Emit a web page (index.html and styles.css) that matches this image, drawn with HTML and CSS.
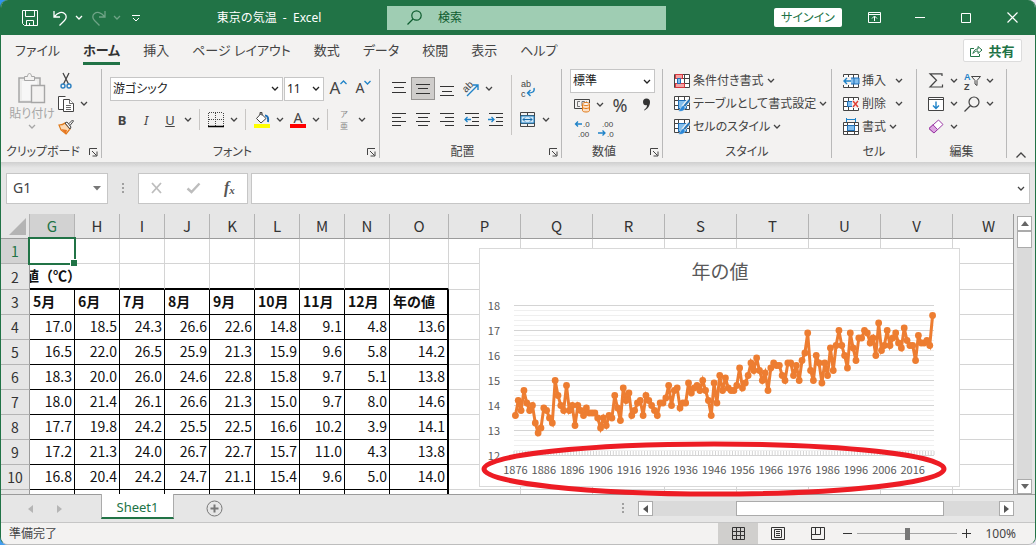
FILE: index.html
```html
<!DOCTYPE html>
<html lang="ja">
<head>
  <meta charset="UTF-8">
  <meta name="viewport" content="width=device-width, initial-scale=1.0">
  <title>東京の気温 - Excel</title>
  <link rel="stylesheet" href="styles.css">
</head>
<body>
  <svg class="defs" width="0" height="0" aria-hidden="true">
    <symbol id="chev" viewBox="0 0 8 5"><path d="M1 1l3 3 3-3" fill="none" stroke="currentColor" stroke-width="1.3"/></symbol>
    <symbol id="launcher" viewBox="0 0 9 9"><path d="M.5 7V.5H8M3 3l4.500 4.500M8 3.500V8H3.500" fill="none" stroke="currentColor"/></symbol>
    <symbol id="grid" viewBox="0 0 16 16"><path d="M.5 1.500h15v13H.5zM.5 5.500h15M.5 10.500h15M5.500 1.500v13M10.500 1.500v13" fill="#fff" stroke="#444"/></symbol>
    <symbol id="brush-grid" viewBox="0 0 16 16">
      <path d="M.5 .5h15v13H.5zM.5 4.500h15M.5 9.500h15M4.500 .5v13M10.500 .5v13" fill="#fff" stroke="#444"/>
      <path d="M4.500 4.500h8v8h-8z" fill="#83beec" stroke="#1e6fb8"/>
      <path d="M15 4L9 11" stroke="#f3f2f1" stroke-width="4"/>
      <path d="M15.500 4L9.500 11" stroke="#2b78b8" stroke-width="2"/>
      <path d="M9.500 9.500c-3 0-2 4-5.500 5.500 4 1 7 0 7-4z" fill="#2b88d8" stroke="#f3f2f1" stroke-width=".5"/>
    </symbol>
  </svg>

  <div class="window">
    <header class="titlebar">
      <div class="title-left">
        <div class="quick">
          <button type="button" aria-label="上書き保存"><svg width="16" height="16" fill="none" stroke="#fff"><path d="M.5 .5h15v15h-13l-2-2zM3.500 .5v6h9v-6M4.500 15.500v-5h7v5M7.500 13v2.500"/></svg></button>
          <button type="button" aria-label="元に戻す"><svg width="15" height="16" fill="none" stroke="#fff" stroke-width="1.300"><path d="M1 1v6h6M1.500 6.500C5 2 9 1.500 11.500 3.500c2.500 2 2 5 0 7L6.500 15.500"/></svg></button>
          <button type="button" class="dd" aria-label="元に戻す履歴"><svg width="8" height="5"><use href="#chev"/></svg></button>
          <button type="button" class="dim" aria-label="やり直し"><svg width="15" height="16" fill="none" stroke="#fff" stroke-width="1.300"><path d="M14 1v6H8M13.500 6.500C10 2 6 1.500 3.500 3.500c-2.500 2-2 5 0 7l5 5"/></svg></button>
          <button type="button" class="dd dim" aria-label="やり直し履歴"><svg width="8" height="5"><use href="#chev"/></svg></button>
          <button type="button" aria-label="クイック アクセスのカスタマイズ"><svg width="8" height="8" fill="none" stroke="#fff"><path d="M0 1.500h8M1 4l3 3 3-3"/></svg></button>
        </div>
        <div class="doc-title">東京の気温&nbsp; -&nbsp; Excel</div>
      </div>
      <label class="search">
        <svg width="15" height="15" fill="none" stroke="#0e5c2f" stroke-width="1.200"><circle cx="9.500" cy="5.500" r="4.700"/><path d="M6 9l-5.500 5.500"/></svg>
        <input type="text" placeholder="検索" aria-label="検索">
      </label>
      <div class="title-right">
        <button type="button" class="signin">サインイン</button>
        <button type="button" class="win" aria-label="リボンの表示オプション"><svg width="13" height="11" fill="none" stroke="#fff"><path d="M.5 .5h12v10H.5zM.5 2.500h12M6.500 9V4.500M4 6.500l2.500-2.500L9 6.500"/></svg></button>
        <button type="button" class="win" aria-label="最小化"><svg width="10" height="10"><path d="M0 4.500h10" stroke="#fff"/></svg></button>
        <button type="button" class="win" aria-label="最大化"><svg width="10" height="10"><path d="M.5 .5h9v9h-9z" fill="none" stroke="#fff"/></svg></button>
        <button type="button" class="win" aria-label="閉じる"><svg width="11" height="11"><path d="M.5 .5l10 10M10.500 .5l-10 10" stroke="#fff" stroke-width="1.200"/></svg></button>
      </div>
    </header>

    <nav class="tabs">
      <a href="#">ファイル</a>
      <a href="#" class="current">ホーム</a>
      <a href="#">挿入</a>
      <a href="#">ページ レイアウト</a>
      <a href="#">数式</a>
      <a href="#">データ</a>
      <a href="#">校閲</a>
      <a href="#">表示</a>
      <a href="#">ヘルプ</a>
      <button type="button" class="share">
        <svg width="13" height="12" fill="none" stroke="#217346"><path d="M4 3.500H.5v8h9V9M3 8.500c.5-3 2.500-4.500 5-4.500V1.500L12 5 8 8.500V6C6 6 4.500 6.500 3 8.500z"/></svg>共有
      </button>
    </nav>

    <div class="ribbon">
      <section class="group g-clip">
        <div class="tools">
          <button type="button" class="paste">
            <svg width="28" height="31" fill="none" stroke="#a6a6a6"><path d="M1 5h21v24H1z" fill="#ededec" stroke-width="1.500"/><path d="M4 8h15v19H4z" fill="#f7f7f7" stroke="none"/><path d="M6.500 7.500v-4h3c0-4 4-4 4 0h3v4z" fill="#f3f2f1"/><path d="M13.500 12.500h13v17h-13z" fill="#f3f2f1" stroke-width="1.400"/></svg>
            <span>貼り付け</span>
            <svg width="8" height="5"><use href="#chev"/></svg>
          </button>
          <div class="clip-side">
            <button type="button" aria-label="切り取り"><svg width="16" height="16" fill="none"><path d="M5 0l5.500 11M11 0L5.500 11" stroke="#444" stroke-width="1.300"/><circle cx="5" cy="13" r="2" stroke="#2b7fc0" stroke-width="1.400"/><circle cx="11" cy="13" r="2" stroke="#2b7fc0" stroke-width="1.400"/></svg></button><span></span>
            <button type="button" aria-label="コピー"><svg width="16" height="16" fill="#fff" stroke="#444"><path d="M6 13.500H.5V.5h7"/><path d="M5.500 3.500h6l4 4v8h-10z"/><path d="M11.500 3.500v4h4M8 9.500h5M8 11.500h5M8 13.500h5" stroke-width=".8"/></svg></button>
            <button type="button" class="dd" aria-label="コピーのオプション"><svg width="8" height="5"><use href="#chev"/></svg></button>
            <button type="button" aria-label="書式のコピー"><svg width="16" height="16"><path d="M1 6c4 0 5-1 6-2l5 6c-2 2-3 4-4 5L3 11z" fill="#fbd9b4" stroke="#e07b1c" stroke-width="1.200"/><path d="M3 10l6 1-1 4z" fill="#e87722"/><path d="M7 4l2-1 4 5-1 2zM10.500 5l4-4 1 1-3.500 4.500" fill="#fff" stroke="#444"/></svg></button><span></span>
          </div>
        </div>
        <footer>クリップボード<button type="button" class="launch" aria-label="クリップボードの設定"><svg width="9" height="9"><use href="#launcher"/></svg></button></footer>
      </section>

      <section class="group g-font">
        <div class="tools stack">
          <div class="row">
            <div class="combo font-name"><select aria-label="フォント"><option>游ゴシック</option></select><svg width="8" height="5"><use href="#chev"/></svg></div>
            <div class="combo font-size"><select aria-label="フォント サイズ"><option>11</option></select><svg width="8" height="5"><use href="#chev"/></svg></div>
            <button type="button" class="grow" aria-label="フォント サイズの拡大">A<svg width="7" height="5"><path d="M.5 4l3-3 3 3" fill="none" stroke="#1f83c8" stroke-width="1.300"/></svg></button>
            <button type="button" class="grow small" aria-label="フォント サイズの縮小">A<svg width="7" height="5"><path d="M.5 1l3 3 3-3" fill="none" stroke="#1f83c8" stroke-width="1.300"/></svg></button>
          </div>
          <div class="row">
            <button type="button" class="b">B</button>
            <button type="button" class="i">I</button>
            <button type="button" class="u">U</button>
            <button type="button" class="dd" aria-label="下線"><svg width="8" height="5"><use href="#chev"/></svg></button>
            <i class="sep"></i>
            <button type="button" aria-label="罫線"><svg width="16" height="16" fill="none" stroke="#444"><path d="M.5 1v13M15.500 1v13M1 .5h14" stroke-dasharray="1 1"/><path d="M7.500 1v13M1 7.500h14" stroke-dasharray="1 1"/><path d="M0 14.500h16" stroke="#000" stroke-width="1.500"/></svg></button>
            <button type="button" class="dd" aria-label="罫線の種類"><svg width="8" height="5"><use href="#chev"/></svg></button>
            <i class="sep"></i>
            <button type="button" aria-label="塗りつぶしの色"><svg width="16" height="16"><path d="M0 12h16v4H0z" fill="#ff0"/><path d="M7 1.500l5 5-5 4.500-4.500-4.500zM6 3V.5h2v3" fill="#fff" stroke="#444"/><path d="M11 3.500c3 0 3.500 3 3 6.500" fill="none" stroke="#1e6fb8" stroke-width="2"/></svg></button>
            <button type="button" class="dd" aria-label="塗りつぶしの色の一覧"><svg width="8" height="5"><use href="#chev"/></svg></button>
            <button type="button" class="font-color">A</button>
            <button type="button" class="dd" aria-label="フォントの色の一覧"><svg width="8" height="5"><use href="#chev"/></svg></button>
            <i class="sep"></i>
            <button type="button" class="ruby"><span>ア</span><span>亜</span></button>
            <button type="button" class="dd" aria-label="ふりがなの設定"><svg width="8" height="5"><use href="#chev"/></svg></button>
          </div>
        </div>
        <footer>フォント<button type="button" class="launch" aria-label="フォントの設定"><svg width="9" height="9"><use href="#launcher"/></svg></button></footer>
      </section>

      <section class="group g-align">
        <div class="tools">
          <div class="stack">
            <div class="row">
              <button type="button" aria-label="上揃え"><svg width="14" height="14" stroke="#333"><path d="M0 .5h14M2 5.500h10M0 10.500h14"/></svg></button>
              <button type="button" class="on" aria-label="上下中央揃え"><svg width="14" height="14" stroke="#333"><path d="M0 2.500h14M2 6.500h10M0 11.500h14"/></svg></button>
              <button type="button" aria-label="下揃え"><svg width="14" height="14" stroke="#333"><path d="M0 4.500h14M2 9.500h10M0 13.500h14"/></svg></button>
              <button type="button" aria-label="方向"><svg width="18" height="18"><text x="0" y="0" class="ab" transform="translate(4 13) rotate(-45)">ab</text><path d="M5 16L15.500 5.500M11 5h5v5" fill="none" stroke="#1f83c8" stroke-width="1.400"/></svg></button>
              <button type="button" class="dd" aria-label="方向の一覧"><svg width="8" height="5"><use href="#chev"/></svg></button>
            </div>
            <div class="row">
              <button type="button" aria-label="左揃え"><svg width="14" height="14" stroke="#333"><path d="M0 .5h14M0 4.500h9M0 8.500h14M0 12.500h9"/></svg></button>
              <button type="button" aria-label="中央揃え"><svg width="14" height="14" stroke="#333"><path d="M0 .5h14M2 4.500h10M0 8.500h14M2 12.500h10"/></svg></button>
              <button type="button" aria-label="右揃え"><svg width="14" height="14" stroke="#333"><path d="M0 .5h14M5 4.500h9M0 8.500h14M5 12.500h9"/></svg></button>
              <button type="button" aria-label="インデントを減らす"><svg width="15" height="14" fill="none" stroke="#333"><path d="M1 .5h14M8 4.500h7M8 8.500h7M1 12.500h14"/><path d="M7 6.500H1M3.500 4L1 6.500 3.500 9" stroke="#1f83c8" stroke-width="1.300"/></svg></button>
              <button type="button" aria-label="インデントを増やす"><svg width="15" height="14" fill="none" stroke="#333"><path d="M1 .5h14M8 4.500h7M8 8.500h7M1 12.500h14"/><path d="M0 6.500h6M3.500 4L6 6.500 3.500 9" stroke="#1f83c8" stroke-width="1.300"/></svg></button>
            </div>
          </div>
          <i class="sep tall"></i>
          <div class="stack">
            <div class="row"><button type="button" class="wrap" aria-label="折り返して全体を表示する"><svg width="16" height="18"><text x="1" y="7" class="ab">ab</text><text x="1" y="17" class="ab">c</text><path d="M14 8c1 4-2 5-6 5M10.500 10L7.500 13l3 3" fill="none" stroke="#1f83c8" stroke-width="1.400"/></svg></button></div>
            <div class="row">
              <button type="button" aria-label="セルを結合して中央揃え"><svg width="16" height="15" fill="none" stroke="#444"><path d="M.5 .5h14v14H.5zM.5 3.500h14M.5 11.500h14M7.500 .5v3M7.500 11.500v3"/><path d="M1 4h13v7H1z" fill="#cfe6f7" stroke="#1f83c8"/><path d="M3 7.500h9M5 5.500l-2 2 2 2M10 5.500l2 2-2 2" stroke="#1569a8"/></svg></button>
              <button type="button" class="dd" aria-label="結合の一覧"><svg width="8" height="5"><use href="#chev"/></svg></button>
            </div>
          </div>
        </div>
        <footer>配置<button type="button" class="launch" aria-label="配置の設定"><svg width="9" height="9"><use href="#launcher"/></svg></button></footer>
      </section>

      <section class="group g-num">
        <div class="tools stack three">
          <div class="combo number"><select aria-label="表示形式"><option>標準</option></select><svg width="8" height="5"><use href="#chev"/></svg></div>
          <div class="row">
            <button type="button" aria-label="通貨表示形式"><svg width="17" height="15" fill="none"><path d="M9 11.500H.5v-9h15V6" stroke="#444"/><path d="M6 4.500H3.500v5H6M8 9V4.500h2.500V8M12.500 4.500v2" stroke="#777"/><path d="M8.500 7v6.500c0 2 7 2 7 0V7" fill="#fce0c4" stroke="#e07b1c"/><ellipse cx="12" cy="7" rx="3.500" ry="1.500" fill="#fff" stroke="#e07b1c"/><path d="M8.500 10c0 2 7 2 7 0" stroke="#e07b1c"/></svg></button>
            <button type="button" class="dd" aria-label="通貨の一覧"><svg width="8" height="5"><use href="#chev"/></svg></button>
            <button type="button" class="percent">%</button>
            <button type="button" aria-label="桁区切りスタイル"><svg width="9" height="13"><path d="M1 4a3.500 3.500 0 0 1 7 0c0 4-2.500 7-5.500 8.500L2 12c2-1.500 3-3 3-5-2 1-4-.5-4-3z" fill="#333"/></svg></button>
          </div>
          <div class="row">
            <button type="button" aria-label="小数点以下の表示桁数を増やす"><svg width="17" height="18"><text x="9" y="8" class="zero">.0</text><text x="4" y="18" class="zero">.00</text><path d="M8 5H1.500M4 2.500L1.500 5 4 7.500" fill="none" stroke="#1f83c8" stroke-width="1.300"/></svg></button>
            <button type="button" aria-label="小数点以下の表示桁数を減らす"><svg width="17" height="18"><text x="4" y="8" class="zero">.00</text><text x="9" y="18" class="zero">.0</text><path d="M0 14h7M4.500 11.500L7 14l-2.500 2.500" fill="none" stroke="#1f83c8" stroke-width="1.300"/></svg></button>
          </div>
        </div>
        <footer>数値<button type="button" class="launch" aria-label="数値の設定"><svg width="9" height="9"><use href="#launcher"/></svg></button></footer>
      </section>

      <section class="group g-style">
        <div class="tools stack three">
          <button type="button" class="line"><svg width="16" height="16"><use href="#grid"/><path d="M1.500 1.500h7v4h-7zM1.500 10.500h9v4h-9z" fill="#f4a3a3" stroke="#d9363e"/><path d="M3.500 5.500h3v5h-3z" fill="#83beec" stroke="#1e6fb8"/></svg>条件付き書式<svg width="8" height="5"><use href="#chev"/></svg></button>
          <button type="button" class="line"><svg width="16" height="16"><use href="#brush-grid"/></svg>テーブルとして書式設定<svg width="8" height="5"><use href="#chev"/></svg></button>
          <button type="button" class="line"><svg width="16" height="16"><use href="#brush-grid"/></svg>セルのスタイル<svg width="8" height="5"><use href="#chev"/></svg></button>
        </div>
        <footer>スタイル</footer>
      </section>

      <section class="group g-cell">
        <div class="tools stack three">
          <button type="button" class="line wide"><svg width="16" height="16"><use href="#grid"/><path d="M6 5h10v6H6z" fill="#83beec" stroke="#1e6fb8"/><path d="M11 5v6" stroke="#1e6fb8"/><path d="M0 4h8v8H0z" fill="#f3f2f1"/><path d="M8 8H1M4 5L1 8l3 3" fill="none" stroke="#1f83c8" stroke-width="1.400"/></svg>挿入<svg width="8" height="5"><use href="#chev"/></svg></button>
          <button type="button" class="line wide"><svg width="16" height="16"><use href="#grid"/><path d="M4.500 5.500h6v5h-6z" fill="#83beec" stroke="#1e6fb8"/><path d="M9 4h7v8H9z" fill="#f3f2f1"/><path d="M10 5l5 6M15 5l-5 6" stroke="#e03c31" stroke-width="1.400"/></svg>削除<svg width="8" height="5"><use href="#chev"/></svg></button>
          <button type="button" class="line"><svg width="16" height="17"><path d="M.5 4.500h15v12H.5zM.5 7.500h15M.5 13.500h15M4.500 4.500v12M11.500 4.500v12" fill="#fff" stroke="#444"/><path d="M4.500 7.500h7v5h-7z" fill="#83beec" stroke="#1e6fb8"/><path d="M3.500 0v4M12.500 0v4M3.500 1.500h9" stroke="#1f83c8"/></svg>書式<svg width="8" height="5"><use href="#chev"/></svg></button>
        </div>
        <footer>セル</footer>
      </section>

      <section class="group g-edit">
        <div class="tools stack three">
          <div class="row">
            <button type="button" aria-label="オート SUM"><svg width="14" height="15" fill="none" stroke="#444" stroke-width="1.200"><path d="M13 3V.8H1L7.500 7.200 1 14h12.500v-2.500"/></svg></button>
            <button type="button" class="dd" aria-label="オート SUM の一覧"><svg width="8" height="5"><use href="#chev"/></svg></button>
            <button type="button" aria-label="並べ替えとフィルター"><svg width="17" height="18"><text x="0" y="8" class="az blue">A</text><text x="0" y="18" class="az">Z</text><path d="M7.500 4.500h9l-3.500 4v5l-2-1.500V8.500z" fill="none" stroke="#444"/></svg></button>
            <button type="button" class="dd" aria-label="並べ替えの一覧"><svg width="8" height="5"><use href="#chev"/></svg></button>
          </div>
          <div class="row">
            <button type="button" aria-label="フィル"><svg width="16" height="14" fill="none" stroke="#444"><path d="M.5 .5h15v13H.5zM.5 2.500h15" fill="#fff"/><path d="M8 4.500v7M5 8.500l3 3 3-3" stroke="#1f83c8" stroke-width="1.400"/></svg></button>
            <button type="button" class="dd" aria-label="フィルの一覧"><svg width="8" height="5"><use href="#chev"/></svg></button>
            <button type="button" aria-label="検索と選択"><svg width="16" height="16" fill="none" stroke="#444" stroke-width="1.200"><circle cx="10" cy="6" r="5"/><path d="M6.500 9.500L.5 15.500"/></svg></button>
            <button type="button" class="dd" aria-label="検索の一覧"><svg width="8" height="5"><use href="#chev"/></svg></button>
          </div>
          <div class="row">
            <button type="button" aria-label="クリア"><svg width="16" height="15" stroke="#9b3aa5"><path d="M10.500 1l4.500 4.500L6 14 1 9.500z" fill="#fff"/><path d="M5 5.800L9.500 10.500 6 14 1 9.500z" fill="#dca4e0"/></svg></button>
            <button type="button" class="dd" aria-label="クリアの一覧"><svg width="8" height="5"><use href="#chev"/></svg></button>
          </div>
        </div>
        <footer>編集</footer>
      </section>
      <button type="button" class="collapse" aria-label="リボンを折りたたむ"><svg width="10" height="6" fill="none" stroke="#444" stroke-width="1.300"><path d="M.5 5.500L5 1l4.500 4.500"/></svg></button>
    </div>

    <div class="formula-bar">
      <div class="namebox"><input type="text" value="G1" aria-label="名前ボックス"><button type="button" aria-label="名前の一覧"><svg width="8" height="5"><path d="M0 0h8L4 4.500z" fill="#777"/></svg></button></div>
      <svg class="dots" width="2" height="11" fill="#a0a0a0"><path d="M0 0h2v2H0zM0 4h2v2H0zM0 8h2v2H0z"/></svg>
      <div class="fx">
        <button type="button" aria-label="キャンセル"><svg width="11" height="10"><path d="M1 0l9 10M10 0L1 10" stroke="#bdbdbd" stroke-width="1.800"/></svg></button>
        <button type="button" aria-label="入力"><svg width="13" height="10"><path d="M.5 5.500L4.500 9l8-8.500" fill="none" stroke="#bdbdbd" stroke-width="2.400"/></svg></button>
        <button type="button" class="fn">f<small>x</small></button>
      </div>
      <div class="formula"><input type="text" aria-label="数式バー"><svg width="8" height="5"><use href="#chev"/></svg></div>
    </div>

    <main class="workspace">
      <div class="sheet">
        <table>
          <colgroup>
            <col class="c-row"><col class="c-m" span="8"><col class="c-y"><col class="c-e" span="8">
          </colgroup>
          <thead>
            <tr><th class="corner"><svg width="17" height="17"><path d="M17 0v17H0z" fill="#b4b4b4"/></svg></th><th class="sel">G</th><th>H</th><th>I</th><th>J</th><th>K</th><th>L</th><th>M</th><th>N</th><th>O</th><th>P</th><th>Q</th><th>R</th><th>S</th><th>T</th><th>U</th><th>V</th><th>W</th></tr>
          </thead>
          <tbody id="rows"></tbody>
        </table>
      </div>
      <svg class="chart" width="481" height="239" id="chart" role="img" aria-label="年の値">
        <defs><marker id="dot" markerUnits="userSpaceOnUse" markerWidth="8" markerHeight="8" refX="4" refY="4"><circle cx="4" cy="4" r="3.400" fill="#ed7d31"/></marker></defs>
        <rect x=".5" y=".5" width="480" height="238" fill="#fff" stroke="#d9d9d9"/>
        <text x="241" y="31" class="chart-title">年の値</text>
        <path id="minor" stroke="#efefef"/>
        <path id="major" stroke="#d4d4d4"/>
        <path id="ticks" stroke="#d4d4d4"/>
        <g id="labels"></g>
        <polyline id="series" fill="none" stroke="#ed7d31" stroke-width="3" marker-start="url(#dot)" marker-mid="url(#dot)" marker-end="url(#dot)"/>
      </svg>
      <svg class="mark" width="468" height="58" aria-hidden="true"><ellipse cx="234" cy="29" rx="230" ry="25" fill="none" stroke="#ed1c24" stroke-width="5"/></svg>
      <div class="vscroll">
        <button type="button" aria-label="上へ"><svg width="8" height="5"><path d="M0 5l4-5 4 5z" fill="#666"/></svg></button>
        <div class="track"><div class="thumb"></div></div>
        <button type="button" aria-label="下へ"><svg width="8" height="5"><path d="M0 0l4 5 4-5z" fill="#666"/></svg></button>
      </div>
    </main>

    <div class="sheetbar">
      <div class="sheet-nav">
        <button type="button" aria-label="前のシート"><svg width="5" height="8"><path d="M5 0v8L0 4z" fill="#b5b5b5"/></svg></button>
        <button type="button" aria-label="次のシート"><svg width="5" height="8"><path d="M0 0v8l5-4z" fill="#b5b5b5"/></svg></button>
      </div>
      <a href="#" class="sheet-tab">Sheet1</a>
      <button type="button" class="add" aria-label="新しいシート"><svg width="17" height="17" fill="none" stroke="#777"><circle cx="8.500" cy="8.500" r="7.500"/><path d="M4.500 8.500h8M8.500 4.500v8" stroke-width="2"/></svg></button>
      <svg class="dots" width="2" height="11" fill="#a0a0a0"><path d="M0 0h2v2H0zM0 4h2v2H0zM0 8h2v2H0z"/></svg>
      <div class="hscroll">
        <button type="button" aria-label="左へ"><svg width="5" height="8"><path d="M5 0v8L0 4z" fill="#555"/></svg></button>
        <div class="track"><div class="thumb"></div></div>
        <button type="button" aria-label="右へ"><svg width="5" height="8"><path d="M0 0v8l5-4z" fill="#555"/></svg></button>
      </div>
    </div>

    <footer class="status">
      <span class="ready">準備完了</span>
      <button type="button" class="view on" aria-label="標準"><svg width="13" height="13" fill="none" stroke="#333"><path d="M.5 .5h12v12H.5zM.5 4.500h12M.5 8.500h12M4.500 .5v12M8.500 .5v12"/></svg></button>
      <button type="button" class="view" aria-label="ページ レイアウト"><svg width="14" height="13" fill="none" stroke="#333"><path d="M.5 .5h13v12H.5zM3.500 2.500h7v8h-7zM5 4.500h4M5 6.500h4M5 8.500h4"/></svg></button>
      <button type="button" class="view" aria-label="改ページ プレビュー"><svg width="14" height="13" fill="none" stroke="#333"><path d="M.5 .5h13v12H.5zM4.500 .5v7M9.500 .5v7M.5 7.500h9"/></svg></button>
      <button type="button" class="zoom-btn" aria-label="縮小"><svg width="9" height="9"><path d="M0 4.500h9" stroke="#333"/></svg></button>
      <input type="range" min="0" max="100" value="50" aria-label="ズーム">
      <button type="button" class="zoom-btn" aria-label="拡大"><svg width="9" height="9"><path d="M0 4.500h9M4.500 0v9" stroke="#333"/></svg></button>
      <span class="percent-label">100%</span>
    </footer>
  </div>
  <script src="script.js"></script>
</body>
</html>
```
FILE: styles.css
```css
* {
  box-sizing: border-box;
}
body {
  margin: 0;
  height: 100vh;
  overflow: hidden;
  background: linear-gradient(100deg, #2f95f0, #e6e4f0 70%);
  font-family: "Noto Sans", "Noto Sans CJK JP", sans-serif;
  font-size: 12px;
  line-height: 16px;
  color: #444;
}
.defs {
  position: absolute;
}
svg {
  display: block;
  flex: none;
}
button {
  display: flex;
  align-items: center;
  justify-content: center;
  padding: 0;
  border: none;
  background: none;
  font: inherit;
  color: inherit;
}
button svg {
  overflow: visible;
}
input,
select {
  font: inherit;
  color: inherit;
  border: none;
  outline: none;
  background: none;
  min-width: 0;
}
.window {
  display: flex;
  flex-direction: column;
  height: 100vh;
  border: 1px solid #217346;
  border-top: none;
  border-bottom-color: #bdbdbd;
  border-radius: 8px;
  overflow: hidden;
  background: #e6e6e6;
}

/* title bar */
.titlebar {
  display: grid;
  grid-template-columns: 386fr 279fr 369fr;
  align-items: center;
  height: 35px;
  flex: none;
  background: #217346;
  color: #fff;
}
.title-left,
.title-right,
.quick {
  display: flex;
  align-items: center;
}
.quick {
  padding-left: 14px;
}
.quick button {
  width: 30px;
  height: 32px;
}
.quick .dd {
  width: 8px;
}
.quick .dim {
  opacity: 0.35;
}
.doc-title {
  flex: 1;
  text-align: center;
  white-space: nowrap;
}
.search {
  display: flex;
  align-items: center;
  gap: 16px;
  height: 24px;
  padding-left: 20px;
  background: #9fcdb3;
  color: #0e5c2f;
}
.search input {
  flex: 1;
  padding: 0;
}
.search input::placeholder {
  color: #0e5c2f;
}
.title-right {
  justify-content: flex-end;
}
.signin {
  width: 68px;
  height: 19px;
  margin-right: 9px;
  background: #fff;
  border-radius: 2px;
  color: #217346;
  font-feature-settings: "palt";
}
.win {
  width: 46px;
  height: 32px;
}

/* tabs */
.tabs {
  display: flex;
  align-items: center;
  gap: 23px;
  height: 31px;
  flex: none;
  padding: 0 13px 0 14px;
  background: #f3f2f1;
  font-size: 13px;
  font-feature-settings: "palt";
}
.tabs a {
  height: 28px;
  line-height: 26px;
  color: #444;
  text-decoration: none;
  white-space: nowrap;
}
.tabs .current {
  font-weight: bold;
  color: #333;
  border-bottom: 3px solid #217346;
}
.share {
  gap: 5px;
  width: 59px;
  height: 23px;
  margin-left: auto;
  background: #fff;
  border: 1px solid #dcdcdc;
  border-radius: 2px;
  color: #217346;
  font-weight: bold;
}

/* ribbon */
.ribbon {
  display: flex;
  height: 96px;
  flex: none;
  padding: 3px 0 4px;
  background: #f3f2f1;
}
.group {
  display: flex;
  flex-direction: column;
  border-right: 1px solid #b9b9b9;
}
.g-clip {
  width: 101px;
}
.g-font {
  width: 278px;
}
.g-align {
  width: 182px;
}
.g-num {
  width: 101px;
}
.g-style {
  width: 169px;
}
.g-cell {
  width: 85px;
}
.g-edit {
  width: 90px;
}
.tools {
  display: flex;
  flex: 1;
}
.stack {
  display: flex;
  flex-direction: column;
  padding-top: 8px;
  gap: 8px;
}
.stack.three {
  padding-top: 0;
  gap: 0;
}
.row {
  display: flex;
  align-items: center;
  height: 23px;
}
.row button {
  width: 24px;
  height: 23px;
}
.row .dd,
.clip-side .dd {
  width: 12px;
}
.group footer {
  display: flex;
  align-items: center;
  justify-content: center;
  position: relative;
  height: 12px;
  font-feature-settings: "palt";
  white-space: nowrap;
}
.launch {
  position: absolute;
  right: 3px;
  top: 2px;
}
.sep {
  width: 1px;
  height: 21px;
  margin: 0 4px 0 5px;
  background: #c8c6c4;
}
.sep.tall {
  height: 60px;
  margin: 6px 4px 0 4px;
}
.paste {
  flex-direction: column;
  justify-content: flex-start;
  width: 44px;
  margin-left: 9px;
  padding-top: 4px;
  gap: 2px;
  color: #a6a6a6;
  font-feature-settings: "palt";
  white-space: nowrap;
}
.clip-side {
  display: grid;
  grid-template-columns: 24px 12px;
  grid-auto-rows: 23px;
}
.group.g-clip footer,
.group.g-font footer,
.group.g-align footer,
.group.g-num footer {
  padding-right: 16px;
}
.g-font .tools {
  padding-left: 8px;
}
.combo {
  display: flex;
  align-items: center;
  position: relative;
  height: 24px;
  border: 1px solid #c6c6c6;
  background: #fff;
  color: #222;
}
.combo select {
  appearance: none;
  width: 100%;
  height: 22px;
  padding: 0 2px;
  font-feature-settings: "palt";
}
.combo svg {
  position: absolute;
  right: 3px;
  pointer-events: none;
}
.font-name {
  width: 173px;
  margin-right: 1px;
}
.font-size {
  width: 40px;
  margin-right: 2px;
}
.row .grow {
  align-items: flex-start;
  width: 25px;
  font-size: 17px;
  line-height: 22px;
}
.row .grow.small {
  font-size: 14px;
}
.grow svg {
  margin-top: 3px;
}
.b {
  font-weight: bold;
}
.b,
.i,
.u {
  font-size: 13px;
}
.i {
  font-style: italic;
}
.u {
  text-decoration: underline;
}
.row .font-color {
  width: 16px;
  height: 16px;
  margin: 0 4px;
  border-bottom: 4px solid #f00;
  font-size: 14px;
  line-height: 12px;
}
.row .ruby {
  flex-direction: column;
  color: #888;
  font-size: 8px;
  line-height: 12px;
}
.g-align .tools {
  padding-left: 7px;
}
.row .on {
  border: 1px solid #979593;
  background: #cfcdcb;
}
.ab,
.zero,
.az {
  font-family: "Liberation Sans", sans-serif;
  font-size: 9px;
  fill: #444;
}
.ab {
  font-size: 10px;
}
.zero {
  font-size: 8px;
}
.az {
  font-weight: bold;
}
.az.blue {
  fill: #1f83c8;
}
.wrap .ab {
  font-size: 9px;
}
.g-num .tools {
  padding-left: 8px;
}
.number {
  width: 85px;
}
.row .percent {
  width: 28px;
  font-size: 18px;
}
.g-style .tools,
.g-cell .tools {
  padding-left: 11px;
}
.line {
  justify-content: flex-start;
  gap: 3px;
  height: 23px;
  font-feature-settings: "palt";
  white-space: nowrap;
}
.line.wide svg:last-child {
  margin-left: 6px;
}
.g-edit .tools {
  padding-left: 7px;
}
.collapse {
  align-self: flex-end;
  flex: 1;
  height: 7px;
}

/* formula bar */
.formula-bar {
  display: flex;
  align-items: center;
  height: 52px;
  flex: none;
  padding: 0 5px;
  background: linear-gradient(#cfcfcf, #e6e6e6 6px);
}
.namebox,
.fx,
.formula {
  display: flex;
  align-items: center;
  height: 31px;
  border: 1px solid #c6c6c6;
  background: #fff;
}
.namebox {
  width: 102px;
  padding: 0 6px;
}
.namebox input {
  flex: 1;
  padding: 0;
  font-size: 14px;
}
.dots {
  margin: 0 14px;
}
.fx {
  justify-content: space-around;
  width: 110px;
  margin-right: 3px;
}
.fn {
  font: italic bold 16px "Liberation Serif", serif;
  color: #555;
}
.fn small {
  font-size: 11px;
  padding-top: 3px;
}
.formula {
  flex: 1;
  padding-right: 4px;
}
.formula input {
  flex: 1;
}

/* sheet */
.workspace {
  display: flex;
  position: relative;
  flex: 1;
  min-height: 0;
}
.sheet {
  flex: 1;
  min-width: 0;
  overflow: hidden;
  border-right: 1px solid #9b9b9b;
  background: #fff;
}
.sheet table {
  width: 1024px;
  table-layout: fixed;
  border-spacing: 0;
  font-family: "Noto Sans CJK JP", sans-serif;
  font-size: 14px;
  line-height: 20px;
  color: #111;
}
.c-row {
  width: 29px;
}
.c-m {
  width: 45px;
}
.c-y {
  width: 59px;
}
.c-e {
  width: 72px;
}
.sheet tr {
  height: 25px;
}
.sheet th {
  padding: 0;
  border: solid #b4b4b4;
  border-width: 0 1px 1px 0;
  background: #e6e6e6;
  font-weight: normal;
  color: #333;
}
.sheet thead th {
  border-bottom-color: #9b9b9b;
  font-size: 15px;
}
.sheet thead .corner {
  padding-left: 8px;
}
.sheet tbody th {
  border-right-color: #9b9b9b;
}
.sheet th.sel {
  background: #d2d2d2;
  color: #217346;
}
.sheet td {
  padding: 0 0 2px;
  border: solid #d4d4d4;
  border-width: 0 1px 1px 0;
  white-space: nowrap;
}
.sheet .active {
  position: relative;
}
.active::before {
  content: "";
  position: absolute;
  inset: -2px;
  border: 2px solid #217346;
}
.active::after {
  content: "";
  position: absolute;
  right: -3px;
  bottom: -3px;
  width: 6px;
  height: 6px;
  background: #217346;
  border: solid #fff;
  border-width: 1px 0 0 1px;
}
.sheet .unit {
  overflow: hidden;
  font-weight: bold;
  text-indent: -5px;
}
.sheet .unit-row {
  height: 26px;
}
.sheet .top {
  border-bottom: 2px solid #000;
}
.sheet .data {
  padding-right: 2px;
  border-color: #000;
  text-align: right;
}
.sheet .head {
  padding-left: 3px;
  font-weight: bold;
  text-align: left;
}
.sheet .last {
  border-right-width: 2px;
}
.chart {
  position: absolute;
  left: 478px;
  top: 34px;
  font-family: "Noto Sans CJK JP", sans-serif;
  font-size: 11px;
  fill: #595959;
}
.chart-title {
  font-size: 19px;
  text-anchor: middle;
}
.chart .year {
  text-anchor: middle;
}
.chart .temp {
  text-anchor: end;
}
.mark {
  position: absolute;
  left: 479px;
  top: 226px;
  z-index: 2;
}

/* scroll bars */
.vscroll {
  display: flex;
  flex-direction: column;
  width: 15px;
  margin: 2px 3px 0 3px;
}
.vscroll button,
.hscroll button,
.thumb {
  flex: none;
  width: 15px;
  height: 15px;
  border: 1px solid #ababab;
  background: #fff;
}
.track {
  flex: 1;
  background: #dadada;
}
.vscroll .thumb {
  height: 17px;
}
.hscroll {
  display: flex;
  width: 376px;
  margin-right: 21px;
}
.hscroll .thumb {
  width: 60%;
  margin-left: 24%;
}

/* sheet tabs */
.sheetbar {
  display: flex;
  align-items: center;
  height: 28px;
  flex: none;
  border-top: 1px solid #9b9b9b;
}
.sheet-nav {
  display: flex;
  justify-content: center;
  gap: 24px;
  width: 100px;
  padding-right: 12px;
}
.sheet-tab {
  align-self: flex-start;
  width: 73px;
  height: 25px;
  margin-top: -1px;
  border: 1px solid #ababab;
  border-width: 0 1px 2px 1px;
  border-bottom-color: #217346;
  background: #fff;
  color: #217346;
  font-size: 13px;
  line-height: 26px;
  text-align: center;
  text-decoration: none;
}
.add {
  margin: 0 auto 0 32px;
}

/* status bar */
.status {
  display: flex;
  align-items: center;
  height: 22px;
  flex: none;
  padding-right: 19px;
  border-top: 1px solid #c6c6c6;
  background: #f3f2f1;
}
.ready {
  margin: 0 auto 0 8px;
}
.view {
  width: 40px;
  height: 21px;
}
.view.on {
  background: #d0cfcd;
}
.zoom-btn {
  width: 19px;
  height: 21px;
}
.status input {
  appearance: none;
  width: 100px;
  height: 12px;
  margin: 0;
  background: linear-gradient(#a6a6a6, #a6a6a6) center / 100% 1px no-repeat;
}
.status input::-webkit-slider-thumb {
  appearance: none;
  width: 5px;
  height: 12px;
  background: #777;
}
.percent-label {
  width: 40px;
  text-align: right;
}
```
FILE: script.js
```javascript
// monthly means (May - Dec) and the yearly mean
var months = ["5月", "6月", "7月", "8月", "9月", "10月", "11月", "12月", "年の値"];
var rows = [
  ["17.0", "18.5", "24.3", "26.6", "22.6", "14.8", "9.1", "4.8", "13.6"],
  ["16.5", "22.0", "26.5", "25.9", "21.3", "15.9", "9.6", "5.8", "14.2"],
  ["18.3", "20.0", "26.0", "24.6", "22.8", "15.8", "9.7", "5.1", "13.8"],
  ["18.0", "21.4", "26.1", "26.6", "21.3", "15.0", "9.7", "8.0", "14.6"],
  ["17.7", "19.8", "24.2", "25.5", "22.5", "16.6", "10.2", "3.9", "14.1"],
  ["17.2", "21.3", "24.0", "26.7", "22.7", "15.7", "11.0", "4.3", "13.8"],
  ["16.8", "20.4", "24.2", "24.7", "21.1", "15.4", "9.6", "5.0", "14.0"]
];

function cells(values, cls) {
  return values.map(function (v, i) {
    return '<td class="' + cls + (i === 8 ? " last" : "") + '">' + v + "</td>";
  }).join("");
}

var blank = "<td></td>".repeat(8);
var html = '<tr><th class="sel">1</th><td class="active"></td>' + "<td></td>".repeat(8) + blank + "</tr>";
html += '<tr class="unit-row"><th>2</th><td class="unit top" colspan="2">値（℃）</td>' + '<td class="top"></td>'.repeat(7) + blank + "</tr>";
html += "<tr><th>3</th>" + cells(months, "data head") + blank + "</tr>";
rows.forEach(function (r, i) {
  html += "<tr><th>" + (i + 4) + "</th>" + cells(r, "data") + blank + "</tr>";
});
html += "<tr><th></th>" + cells(months.map(function () { return ""; }), "data") + blank + "</tr>";
document.getElementById("rows").innerHTML = html;

// yearly mean temperature, 1876 - 2023
var temps = [
  13.6, 14.2, 13.8, 14.6, 14.1, 13.8, 14.0, 13.3, 12.9, 13.1,
  13.9, 13.8, 13.5, 13.3, 15.0, 14.4, 14.0, 13.8, 14.8, 13.8,
  14.0, 13.2, 14.0, 13.8, 13.6, 13.9, 13.7, 13.7, 13.7, 13.5,
  13.1, 13.5, 13.2, 13.6, 13.5, 14.4, 13.9, 13.4, 14.7, 14.2,
  14.5, 13.6, 13.8, 14.1, 14.2, 13.6, 14.4, 14.2, 14.0, 13.8,
  13.6, 14.1, 14.1, 14.3, 14.8, 14.0, 14.6, 14.7, 13.9, 14.1,
  14.1, 14.9, 14.5, 14.7, 14.8, 14.6, 15.0, 14.6, 14.2, 13.6,
  14.9, 14.1, 15.2, 14.6, 15.1, 14.7, 14.6, 14.6, 14.8, 15.5,
  14.7, 14.9, 15.2, 15.7, 15.4, 15.9, 15.4, 15.0, 15.3, 14.6,
  15.5, 15.7, 15.6, 15.6, 15.2, 15.0, 15.7, 15.7, 15.2, 15.6,
  15.0, 15.8, 16.1, 16.9, 15.4, 15.0, 16.0, 15.7, 14.9, 15.7,
  15.2, 16.3, 15.4, 16.4, 17.0, 16.4, 16.0, 15.5, 16.9, 16.3,
  15.8, 16.7, 16.7, 17.0, 16.9, 16.5, 16.7, 16.0, 17.3, 16.2,
  16.4, 17.0, 16.4, 16.7, 16.9, 16.5, 16.3, 17.1, 16.6, 16.4,
  16.4, 15.8, 16.8, 16.5, 16.5, 16.6, 16.4, 17.6
];
var left = 35, right = 455, top18 = 57.5, unit = 25;
var step = (right - left) / temps.length;
var minor = "", major = "", ticks = "", labels = "";

for (var k = 0; k <= 30; k++) {
  var line = "M" + left + " " + (top18 + k * 5) + "H" + right;
  if (k % 5 === 0) {
    major += line;
    labels += '<text class="temp" x="21" y="' + (top18 + k * 5 + 4) + '">' + (18 - k / 5) + "</text>";
  } else {
    minor += line;
  }
}
for (var t = 0; t <= temps.length; t++) {
  ticks += "M" + (left + t * step) + " 203v4";
}
for (var y = 0; y < temps.length; y += 10) {
  labels += '<text class="year" x="' + (left + (y + 0.5) * step) + '" y="226">' + (1876 + y) + "</text>";
}
document.getElementById("minor").setAttribute("d", minor);
document.getElementById("major").setAttribute("d", major);
document.getElementById("ticks").setAttribute("d", ticks);
document.getElementById("labels").innerHTML = labels;
document.getElementById("series").setAttribute("points", temps.map(function (v, i) {
  return (left + (i + 0.5) * step) + "," + (top18 + (18 - v) * unit);
}).join(" "));
```
